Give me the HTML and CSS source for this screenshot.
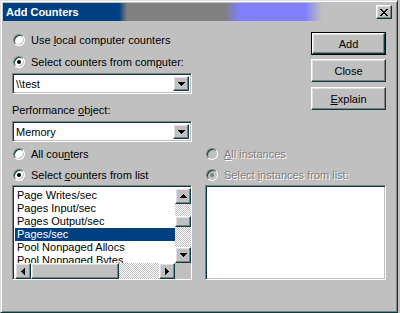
FILE: index.html
```html
<!DOCTYPE html>
<html lang="en">
<head>
  <meta charset="UTF-8">
  <title>Add Counters</title>
  <link rel="stylesheet" href="styles.css">
</head>
<body>
  <div class="window">
    <div class="titlebar">
      <span class="title">Add Counters</span>
      <span class="title-close raised">
        <svg width="8" height="7" viewBox="0 0 8 7"><path d="M0 0h2v1H0zM6 0h2v1H6zM1 1h2v1H1zM5 1h2v1H5zM2 2h4v1H2zM3 3h2v1H3zM2 4h4v1H2zM1 5h2v1H1zM5 5h2v1H5zM0 6h2v1H0zM6 6h2v1H6z"/></svg>
      </span>
    </div>

    <div class="content">
      <div class="col-left">
        <div class="radio-row"><span class="radio"></span><span>Use <u>l</u>ocal computer counters</span></div>
        <div class="radio-row row-computer"><span class="radio checked"></span><span>Select counters from com<u>p</u>uter:</span></div>
        <div class="combo combo-computer">
          <span class="combo-text">\\test</span>
          <span class="drop-btn raised">
            <svg width="7" height="4" viewBox="0 0 7 4"><path d="M0 0h7v1H0zM1 1h5v1H1zM2 2h3v1H2zM3 3h1v1H3z"/></svg>
          </span>
        </div>
        <div class="field-label">Performance <u>o</u>bject:</div>
        <div class="combo combo-object">
          <span class="combo-text">Memory</span>
          <span class="drop-btn raised">
            <svg width="7" height="4" viewBox="0 0 7 4"><path d="M0 0h7v1H0zM1 1h5v1H1zM2 2h3v1H2zM3 3h1v1H3z"/></svg>
          </span>
        </div>
        <div class="radio-row row-all"><span class="radio"></span><span>All cou<u>n</u>ters</span></div>
        <div class="radio-row row-select"><span class="radio checked"></span><span>Select <u>c</u>ounters from list</span></div>

        <div class="listbox counters-list">
          <div class="list-items">
            <div class="list-item">Page Writes/sec</div>
            <div class="list-item">Pages Input/sec</div>
            <div class="list-item">Pages Output/sec</div>
            <div class="list-item selected">Pages/sec</div>
            <div class="list-item">Pool Nonpaged Allocs</div>
            <div class="list-item">Pool Nonpaged Bytes</div>
          </div>
          <div class="vscroll">
            <span class="scroll-btn raised">
              <svg width="7" height="4" viewBox="0 0 7 4"><path d="M3 0h1v1H3zM2 1h3v1H2zM1 2h5v1H1zM0 3h7v1H0z"/></svg>
            </span>
            <span class="track vtrack-top"></span>
            <span class="vthumb raised"></span>
            <span class="track track-fill"></span>
            <span class="scroll-btn raised">
              <svg width="7" height="4" viewBox="0 0 7 4"><path d="M0 0h7v1H0zM1 1h5v1H1zM2 2h3v1H2zM3 3h1v1H3z"/></svg>
            </span>
          </div>
          <div class="hscroll">
            <span class="scroll-btn raised">
              <svg width="4" height="7" viewBox="0 0 4 7"><path d="M3 0h1v7H3zM2 1h1v5H2zM1 2h1v3H1zM0 3h1v1H0z"/></svg>
            </span>
            <span class="hthumb raised"></span>
            <span class="track track-fill"></span>
            <span class="scroll-btn raised">
              <svg width="4" height="7" viewBox="0 0 4 7"><path d="M0 0h1v7H0zM1 1h1v5H1zM2 2h1v3H2zM3 3h1v1H3z"/></svg>
            </span>
          </div>
          <div class="corner"></div>
        </div>
      </div>

      <div class="col-right">
        <div class="btn btn-default"><span class="btn-face raised">Add</span></div>
        <div class="btn btn-close"><span class="btn-face raised">Close</span></div>
        <div class="btn btn-explain"><span class="btn-face raised"><u>E</u>xplain</span></div>

        <div class="radio-row disabled row-instances"><span class="radio"></span><span><u>A</u>ll instances</span></div>
        <div class="radio-row disabled row-select"><span class="radio checked"></span><span>Select <u>i</u>nstances from list:</span></div>
        <div class="listbox instances-list"></div>
      </div>
    </div>
  </div>
</body>
</html>
```

FILE: styles.css
```css
body {
  margin: 0;
  background: #c0c0c0;
  font-family: "Liberation Sans", Arial, sans-serif;
  font-size: 11px;
  color: #000;
}

.window {
  width: 398px;
  height: 313px;
  box-sizing: border-box;
  padding: 2px;
  border: 1px solid;
  border-color: #dfdfdf #0c3c3c #0c3c3c #dfdfdf;
  box-shadow: inset 1px 1px #fff, inset -1px -1px #808080;
  background: #c0c0c0;
}

/* bevels */
.raised {
  box-sizing: border-box;
  border: 1px solid;
  border-color: #fff #0c3c3c #0c3c3c #fff;
  box-shadow: inset -1px -1px #808080, inset 1px 1px #dfdfdf;
  background: #c0c0c0;
}

.combo,
.listbox,
.radio {
  box-sizing: border-box;
  border: 1px solid;
  border-color: #808080 #fff #fff #808080;
  box-shadow: inset 1px 1px #0c3c3c, inset -1px -1px #c0c0c0;
  background: #fff;
}

/* title bar */
.titlebar {
  height: 18px;
  display: flex;
  align-items: center;
  justify-content: space-between;
  padding: 0 3px;
  background: linear-gradient(to right, #004080 116px, #808080 124px, #808080 222px, #8080ff 237px, #8080ff 302px, #c0c0c0 319px);
}

.title {
  color: #fff;
  font-weight: bold;
  font-size: 11px;
}

.title-close {
  width: 16px;
  height: 14px;
  display: flex;
  align-items: center;
  justify-content: center;
}

/* layout */
.content {
  display: flex;
  gap: 13px;
  padding: 11px 0 0 9px;
}

.col-left {
  width: 180px;
  display: flex;
  flex-direction: column;
}

.col-right {
  width: 181px;
  display: flex;
  flex-direction: column;
}

/* radios */
.radio-row {
  display: flex;
  align-items: center;
  gap: 6px;
  height: 16px;
  line-height: 16px;
  padding-left: 1px;
  white-space: nowrap;
}

.radio {
  width: 12px;
  height: 12px;
  border-radius: 50%;
  flex: none;
  position: relative;
}

.radio.checked::after {
  content: "";
  position: absolute;
  left: 3px;
  top: 3px;
  width: 4px;
  height: 4px;
  border-radius: 50%;
  background: #000;
}

.disabled {
  color: #808080;
  text-shadow: 1px 1px 0 #fff;
}

.disabled .radio {
  background: #c0c0c0;
}

.disabled .radio.checked::after {
  background: #808080;
}

.row-computer { margin-top: 6px; }
.row-all { margin-top: 4px; }
.row-select { margin-top: 5px; }
.row-instances { margin-top: 36px; }

/* combo boxes */
.combo {
  height: 21px;
  padding: 2px;
  display: flex;
  align-items: stretch;
}

.combo-computer { margin-top: 3px; }
.combo-object { margin-top: 3px; }

.combo-text {
  flex: 1;
  padding-left: 1px;
  line-height: 17px;
}

.drop-btn {
  width: 16px;
  display: flex;
  align-items: center;
  justify-content: center;
}

.field-label {
  margin-top: 8px;
  height: 16px;
  line-height: 16px;
}

/* list boxes */
.listbox {
  margin-top: 2px;
  height: 95px;
}

.counters-list {
  padding: 2px;
  display: grid;
  grid-template-columns: 160px 16px;
  grid-template-rows: 75px 16px;
}

.list-items {
  overflow: hidden;
  padding-top: 1px;
}

.list-item {
  height: 13px;
  line-height: 13px;
  padding-left: 2px;
  white-space: nowrap;
}

.list-item.selected {
  background: #004080;
  color: #fff;
}

.vscroll {
  display: flex;
  flex-direction: column;
}

.hscroll {
  display: flex;
}

.scroll-btn {
  width: 16px;
  height: 16px;
  flex: none;
  display: flex;
  align-items: center;
  justify-content: center;
}

.track {
  background-color: #c0c0c0;
  background-image: conic-gradient(#fff 25%, #c0c0c0 0 50%, #fff 0 75%, #c0c0c0 0);
  background-size: 2px 2px;
}

.track-fill { flex: 1; }
.vtrack-top { height: 12px; flex: none; }

.vthumb {
  height: 11px;
  flex: none;
}

.hthumb {
  width: 88px;
  flex: none;
}

.corner {
  background: #c0c0c0;
}

/* push buttons */
.btn {
  align-self: flex-end;
  width: 75px;
  height: 23px;
  display: flex;
}

.btn-face {
  flex: 1;
  display: flex;
  align-items: center;
  justify-content: center;
}

.btn-default {
  box-sizing: border-box;
  border: 1px solid #000;
}

.btn-close { margin-top: 4px; }
.btn-explain { margin-top: 5px; }
```
